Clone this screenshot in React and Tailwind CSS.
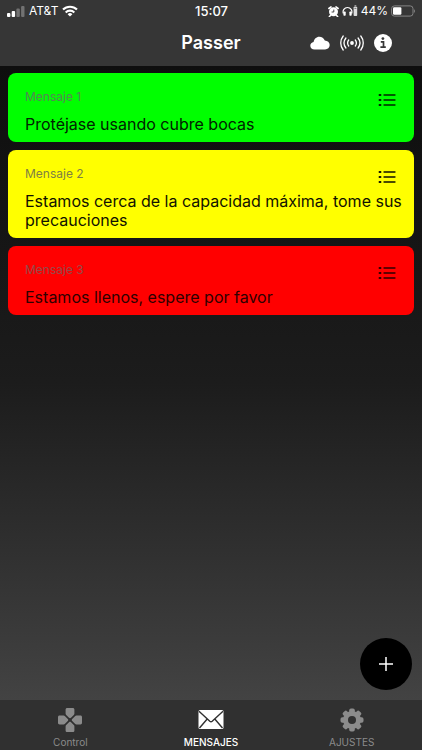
const messages = [
  { id: 1, title: "Mensaje 1", text: "Protéjase usando cubre bocas", card: "bg-[#00ff00]", label: "text-[#558755]", body: "text-[#002400]" },
  {
    id: 2,
    title: "Mensaje 2",
    text: "Estamos cerca de la capacidad máxima, tome sus precauciones",
    card: "bg-[#ffff00]",
    label: "text-[#808044]",
    body: "text-[#111100]",
  },
  { id: 3, title: "Mensaje 3", text: "Estamos llenos, espere por favor", card: "bg-[#ff0000]", label: "text-[#944a4a]", body: "text-[#2e0000]" },
]

const SignalIcon = () => (
  <svg width="18" height="11" viewBox="0 0 18 11" fill="#fff" aria-hidden="true">
    <rect x="0" y="7" width="3.4" height="4" rx="1" />
    <rect x="4.7" y="5" width="3.4" height="6" rx="1" />
    <rect x="9.4" y="2.5" width="3.4" height="8.5" rx="1" opacity=".3" />
    <rect x="14.1" y="0" width="3.4" height="11" rx="1" opacity=".3" />
  </svg>
)

const WifiIcon = () => (
  <svg width="16" height="12" viewBox="0 0 16 12" fill="none" stroke="#fff" strokeWidth="2.1" aria-hidden="true">
    <path d="M1 4.6a10 10 0 0 1 14 0" />
    <path d="M3.7 7.4a6.2 6.2 0 0 1 8.6 0" />
    <path d="M8 11.6 5.6 9.2a3.5 3.5 0 0 1 4.8 0z" fill="#fff" stroke="none" />
  </svg>
)

const AlarmIcon = () => (
  <svg width="11" height="11" viewBox="0 0 11 11" aria-hidden="true">
    <circle cx="5.5" cy="5.8" r="4.5" fill="#fff" />
    <path d="M.9 2.5 3 .9M10.1 2.5 8 .9M2.4 9.5l-1 1M8.6 9.5l1 1" stroke="#fff" strokeWidth="1.6" strokeLinecap="round" />
    <path d="M5.8 3.6V6H3.6" fill="none" stroke="#363636" strokeWidth=".9" />
  </svg>
)

const HeadphonesIcon = () => (
  <svg width="16" height="12" viewBox="0 0 16 12" aria-hidden="true">
    <path d="M1.4 8.5A4.4 4.4 0 1 1 9.6 8.5" fill="none" stroke="#fff" strokeWidth="1.2" />
    <rect x="1.4" y="6.5" width="2.3" height="4.2" rx=".8" fill="#fff" />
    <rect x="7.4" y="6.5" width="2.3" height="4.2" rx=".8" fill="#fff" />
    <rect x="11.6" y="1.7" width="3.6" height="9.3" rx=".8" fill="#ddd" />
    <path d="M12.5.9h1.8" stroke="#ddd" strokeWidth="1" />
    <path d="M12.4 3.4h2" stroke="#777" strokeWidth="1" />
  </svg>
)

const BatteryIcon = () => (
  <svg width="25" height="12" viewBox="0 0 25 12" aria-hidden="true">
    <rect x=".6" y=".9" width="21.4" height="10.2" rx="2.8" fill="none" stroke="#858585" strokeWidth="1" />
    <rect x="2" y="2.3" width="8.4" height="7.4" rx="1.2" fill="#fff" />
    <path d="M23.1 4.2v3.6c1.3-.5 1.3-3.1 0-3.6z" fill="#858585" />
  </svg>
)

const CloudIcon = () => (
  <svg width="20" height="14" viewBox="0 0 20 14" fill="#fff" aria-hidden="true">
    <path d="M4.6 13.4C2 13.4.3 11.8.3 9.7c0-1.9 1.4-3.4 3.3-3.7C4.1 3 6.3.7 9.3.7c2.5 0 4.6 1.5 5.5 3.9 2.7.2 4.9 1.9 4.9 4.5 0 2.6-2 4.3-4.6 4.3z" />
  </svg>
)

const RadioIcon = () => (
  <svg width="24" height="18" viewBox="0 0 24 18" fill="none" stroke="#fff" strokeWidth="1.3" strokeLinecap="round" aria-hidden="true">
    <circle cx="12" cy="9" r="1.9" fill="#fff" stroke="none" />
    <path d="M8.7 6a5 5 0 0 0 0 6M15.3 6a5 5 0 0 1 0 6" />
    <path d="M5.9 4a8.2 8.2 0 0 0 0 10M18.1 4a8.2 8.2 0 0 1 0 10" />
    <path d="M3.2 2a11.2 11.2 0 0 0 0 14M20.8 2a11.2 11.2 0 0 1 0 14" />
  </svg>
)

const InfoIcon = () => (
  <svg width="18" height="18" viewBox="0 0 18 18" aria-hidden="true">
    <circle cx="9" cy="9" r="9" fill="#fff" />
    <circle cx="8.9" cy="4.6" r="1.4" fill="#363636" />
    <path d="M6.8 7.8h2.7v5M6.4 13.1h5.4" fill="none" stroke="#363636" strokeWidth="1.7" />
  </svg>
)

const ListIcon = () => (
  <svg width="18" height="14" viewBox="0 0 18 14" fill="none" stroke="currentColor" strokeWidth="1.3" strokeLinecap="round" aria-hidden="true">
    <path d="M6 2h11M6 7h11M6 12h11" />
    <path d="M1.5 2h1M1.5 7h1M1.5 12h1" strokeWidth="1.9" />
  </svg>
)

const PadIcon = () => (
  <svg width="24" height="24" viewBox="0 0 24 24" fill="currentColor" aria-hidden="true">
    {[0, 90, 180, 270].map((angle) => (
      <path
        key={angle}
        d="M7.6 1.6C7.6.6 8.3 0 9.2 0h5.6c.9 0 1.6.6 1.6 1.6v4c0 .6-.2 1-.6 1.4l-2.8 2.800c-.6.6-1.400.6-2 0L8.200 7c-.4-.4-.6-.8-.6-1.400z"
        transform={`rotate(${angle} 12 12)`}
      />
    ))}
  </svg>
)

const MailIcon = () => (
  <svg width="26" height="20" viewBox="0 0 26 20" aria-hidden="true">
    <rect x=".5" y="0" width="25" height="19" rx="1.5" fill="#fff" />
    <path d="m1 1.2 10.8 10c.7.6 1.7.6 2.4 0L25 1.2M1.5 18l7.7-9M24.5 18l-7.7-9" fill="none" stroke="#303030" strokeWidth="1.4" />
  </svg>
)

const GearIcon = () => (
  <svg width="24" height="24" viewBox="0 0 24 24" fill="currentColor" aria-hidden="true">
    {[0, 45, 90, 135].map((angle) => (
      <rect key={angle} x="9.2" y=".5" width="5.6" height="23" rx="1.8" transform={`rotate(${angle} 12 12)`} />
    ))}
    <circle cx="12" cy="12" r="9" />
    <circle cx="12" cy="12" r="4" fill="#303030" />
  </svg>
)

const tabs = [
  { name: "Control", icon: PadIcon },
  { name: "MENSAJES", icon: MailIcon, active: true },
  { name: "AJUSTES", icon: GearIcon },
]

const StatusBar = () => (
  <div className="grid h-5 grid-cols-[1fr_auto_1fr] items-center pt-[2px] pr-[6px] pl-[7px] text-xs leading-4 text-white">
    <div className="flex items-center gap-1">
      <SignalIcon />
      <span>AT&amp;T</span>
      <WifiIcon />
    </div>
    <span className="text-[13px] font-medium">15:07</span>
    <div className="flex items-center justify-end gap-[3px]">
      <AlarmIcon />
      <HeadphonesIcon />
      <span>44%</span>
      <BatteryIcon />
    </div>
  </div>
)

const MessageCard = ({ message }) => (
  <article className={`rounded-lg pt-4 pr-2 pb-2 pl-[17px] ${message.card}`}>
    <div className="flex justify-between pr-[10px]">
      <h2 className={`text-xs leading-4 ${message.label}`}>{message.title}</h2>
      <button type="button" aria-label={`Opciones de ${message.title}`} className={`mt-1 h-[14px] ${message.body}`}>
        <ListIcon />
      </button>
    </div>
    <p className={`mt-2 text-base leading-[19px] ${message.body}`}>{message.text}</p>
  </article>
)

export default function App() {
  return (
    <div className="flex min-h-screen flex-col bg-[#303030] font-['Inter',sans-serif]">
      <header className="bg-[#363636]">
        <StatusBar />
        <div className="grid h-[46px] grid-cols-[1fr_auto_1fr] items-center px-[30px] text-white">
          <span></span>
          <h1 className="text-lg leading-6 font-semibold">Passer</h1>
          <div className="flex items-center justify-end gap-[10px]">
            <button type="button" aria-label="Nube">
              <CloudIcon />
            </button>
            <button type="button" aria-label="Señal">
              <RadioIcon />
            </button>
            <button type="button" aria-label="Información">
              <InfoIcon />
            </button>
          </div>
        </div>
      </header>

      <main className="relative flex flex-1 flex-col gap-2 bg-linear-to-b from-[#0e0e0e] via-[#1c1c1c] to-[#434343] px-2 pt-[7px]">
        {messages.map((message) => (
          <MessageCard key={message.id} message={message} />
        ))}

        {/* Add message */}
        <button
          type="button"
          aria-label="Agregar mensaje"
          className="absolute right-[10px] bottom-[10px] flex size-[52px] items-center justify-center rounded-full bg-black"
        >
          <svg width="14" height="14" viewBox="0 0 14 14" stroke="#fff" strokeWidth="1.5" aria-hidden="true">
            <path d="M7 0v14M0 7h14" />
          </svg>
        </button>
      </main>

      <nav className="grid h-[50px] grid-cols-3 bg-[#303030]">
        {tabs.map(({ name, icon: Icon, active }) => (
          <a
            key={name}
            href={`#${name.toLowerCase()}`}
            aria-current={active ? "page" : undefined}
            className={`flex flex-col items-center pt-2 text-[10px] leading-3 ${active ? "font-medium text-white" : "text-[#8b8b8b]"}`}
          >
            <span className="flex h-6 items-center">
              <Icon />
            </span>
            <span className="mt-1">{name}</span>
          </a>
        ))}
      </nav>
    </div>
  )
}
